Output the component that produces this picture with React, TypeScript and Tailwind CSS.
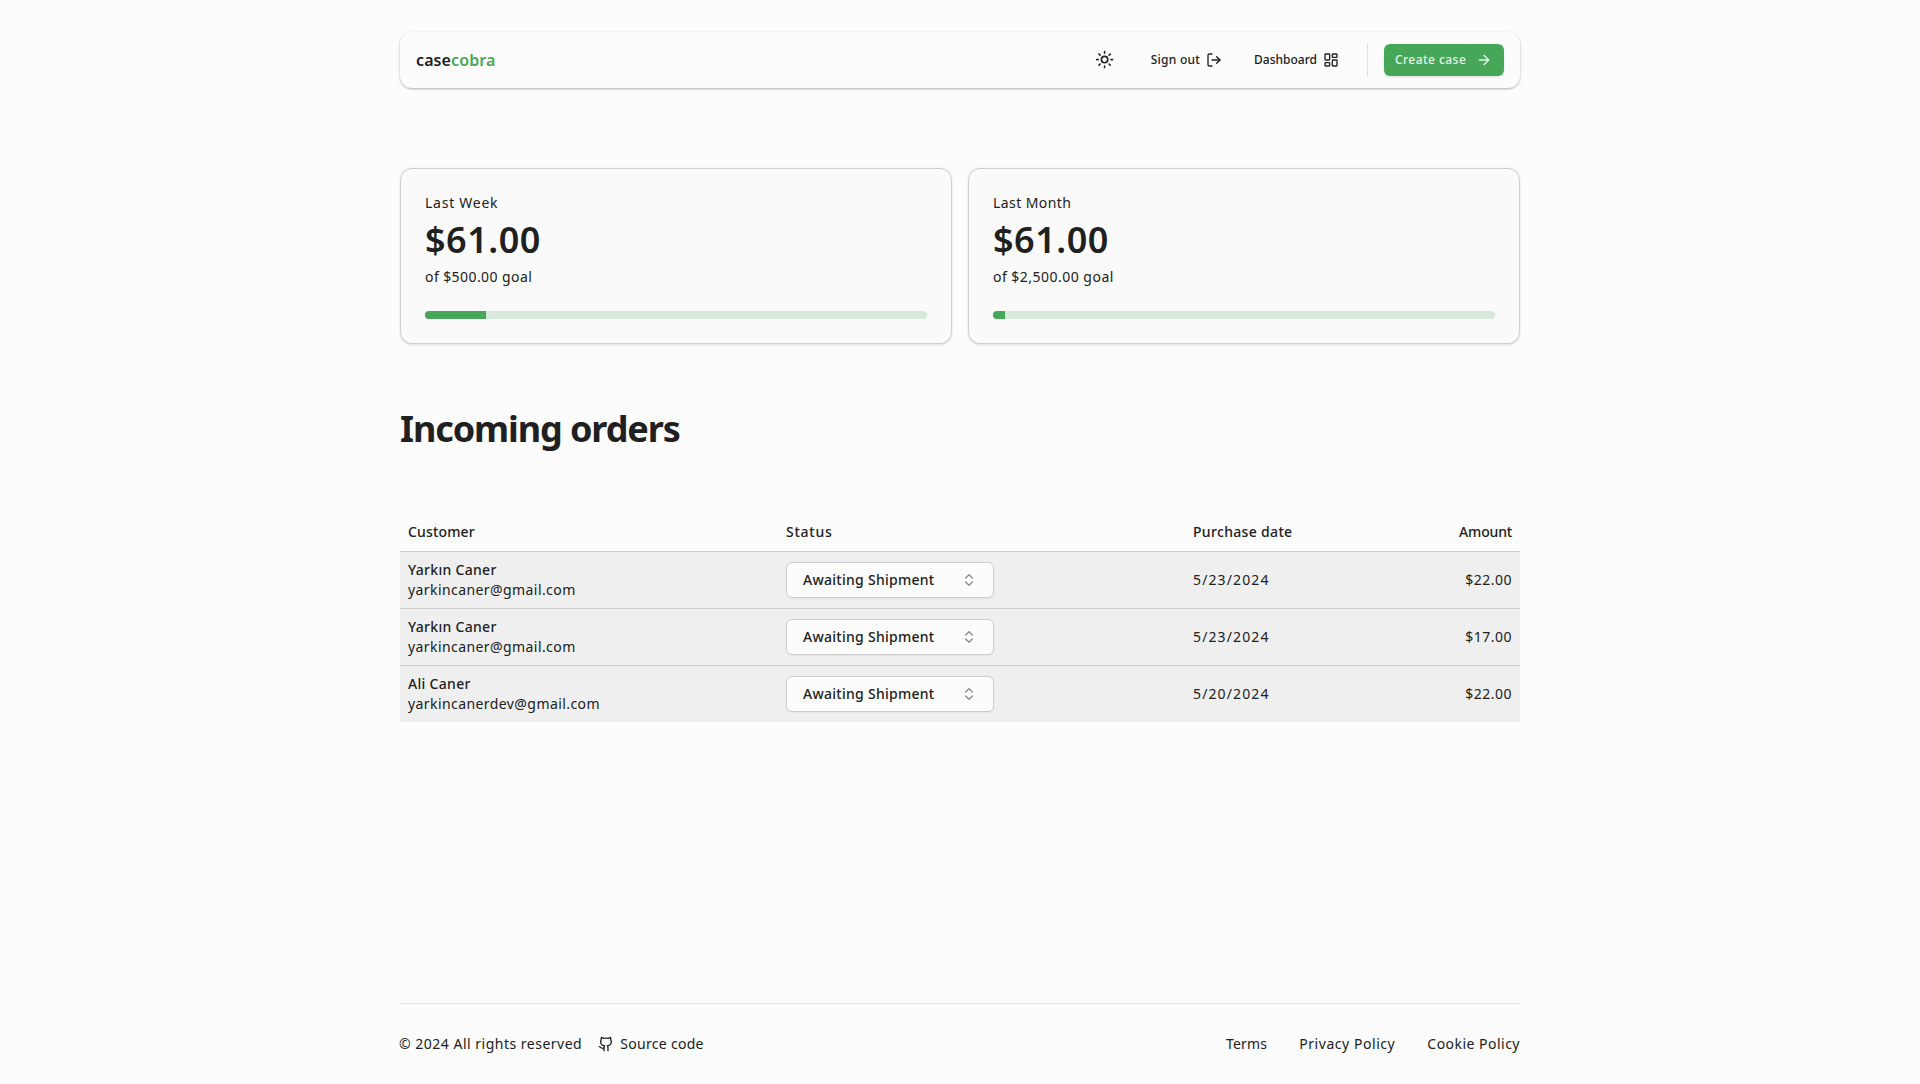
import { ArrowRight, ChevronsUpDown, Github, LayoutDashboard, LogOut, Sun } from "lucide-react";

const stats = [
  { label: "Last Week", labelClass: "tracking-[0.75px]", goal: "of $500.00 goal", goalClass: "tracking-[0.42px]", percent: 12.2 },
  { label: "Last Month", labelClass: "tracking-[0.42px]", goal: "of $2,500.00 goal", goalClass: "tracking-[0.48px]", percent: 2.44 },
];

const orders = [
  { name: "Yarkın Caner", email: "yarkincaner@gmail.com", date: "5/23/2024", amount: "$22.00" },
  { name: "Yarkın Caner", email: "yarkincaner@gmail.com", date: "5/23/2024", amount: "$17.00" },
  { name: "Ali Caner", email: "yarkincanerdev@gmail.com", date: "5/20/2024", amount: "$22.00" },
];

const columns = "grid grid-cols-[378px_407px_1fr_160px] items-center";

function Header() {
  return (
    <header className="flex h-14 items-center justify-between rounded-xl bg-[#fcfcfc] px-4 shadow-[0_1px_3px_rgba(0,0,0,0.16),0_1px_2px_rgba(0,0,0,0.16)]">
      <a className="text-base font-semibold tracking-[0.1px]">
        case<span className="text-[#46a758]">cobra</span>
      </a>
      <nav className="flex items-center text-xs font-medium">
        <button className="mr-7 flex size-9 items-center justify-center">
          <Sun className="size-[19.2px]" />
        </button>
        <a className="mr-8 flex items-center gap-1.5">
          <span className="tracking-[0.25px]">Sign out</span>
          <LogOut className="size-4" />
        </a>
        <a className="mr-7 flex items-center gap-1.5">
          <span>Dashboard</span>
          <LayoutDashboard className="size-4" />
        </a>
        <div className="mr-4 h-8 w-px bg-[#e0e0e0]" />
        <button className="flex h-8 w-[120px] items-center justify-between rounded-md bg-[#46a758] px-3 text-[#e8f5e9] shadow-sm">
          <span className="-ml-px whitespace-nowrap tracking-[0.45px]">Create case</span>
          <ArrowRight className="size-4" />
        </button>
      </nav>
    </header>
  );
}

function StatCard({ label, labelClass, goal, goalClass, percent }: (typeof stats)[number]) {
  return (
    <section className="flex h-44 flex-col rounded-xl border border-[#cecece] bg-[#fafafa] px-6 pt-6 shadow">
      <p className={`text-sm ${labelClass}`}>{label}</p>
      <h3 className="mt-[7px] text-4xl font-semibold tracking-[0.5px]">$61.00</h3>
      <p className={`mt-[7px] text-sm ${goalClass}`}>{goal}</p>
      <div className="mt-6 h-2 w-full overflow-hidden rounded-full bg-[#d7e9da]">
        <div className="h-full bg-[#46a758]" style={{ width: `${percent}%` }} />
      </div>
    </section>
  );
}

function StatusSelect() {
  return (
    <button className="flex h-9 w-52 items-center justify-between rounded-md border border-[#cecece] bg-[#fcfcfc] px-4 font-medium shadow-xs">
      <span className="tracking-[0.27px]">Awaiting Shipment</span>
      <ChevronsUpDown className="size-4 opacity-50" />
    </button>
  );
}

function Orders() {
  return (
    <div className="mt-[63px] text-sm">
      <div className={`${columns} h-10 border-b border-[#cecece] font-medium`}>
        <span className="px-2 tracking-[0.15px]">Customer</span>
        <span className="px-2 tracking-[0.75px]">Status</span>
        <span className="px-2 tracking-[0.33px]">Purchase date</span>
        <span className="px-2 text-right tracking-[-0.15px]">Amount</span>
      </div>
      {orders.map((order, i) => (
        <div key={i} className={`${columns} h-[57px] border-b border-[#cecece] bg-[#efefef] last:h-14 last:border-b-0`}>
          <div className="px-2">
            <p className="font-medium tracking-[0.3px]">{order.name}</p>
            <p className="tracking-[0.42px]">{order.email}</p>
          </div>
          <div className="px-2">
            <StatusSelect />
          </div>
          <span className="px-2 tracking-[1.12px]">{order.date}</span>
          <span className="px-2 text-right tracking-[0.5px]">{order.amount}</span>
        </div>
      ))}
    </div>
  );
}

function Footer() {
  return (
    <footer className="mt-auto flex h-[81px] items-center justify-between border-t border-[#e0e0e0] text-sm">
      <div className="flex items-center gap-4">
        <span className="-ml-px tracking-[0.5px]">© 2024 All rights reserved</span>
        <a className="flex items-center gap-1.5">
          <Github className="size-4" />
          <span className="tracking-[0.3px]">Source code</span>
        </a>
      </div>
      <div className="flex items-center gap-8">
        <a className="tracking-[0.2px]">Terms</a>
        <a className="tracking-[0.55px]">Privacy Policy</a>
        <a className="tracking-[0.48px]">Cookie Policy</a>
      </div>
    </footer>
  );
}

export default function App() {
  return (
    <div className="flex min-h-screen justify-center bg-[#fcfcfc] font-['Noto_Sans',sans-serif] text-[#202020]">
      <div className="flex w-[1120px] flex-col pt-8">
        <Header />
        <main>
          <div className="mt-20 grid grid-cols-2 gap-4">
            {stats.map((stat) => (
              <StatCard key={stat.label} {...stat} />
            ))}
          </div>
          <h1 className="mt-[65px] text-4xl font-bold tracking-[-1.1px]">Incoming orders</h1>
          <Orders />
        </main>
        <Footer />
      </div>
    </div>
  );
}
